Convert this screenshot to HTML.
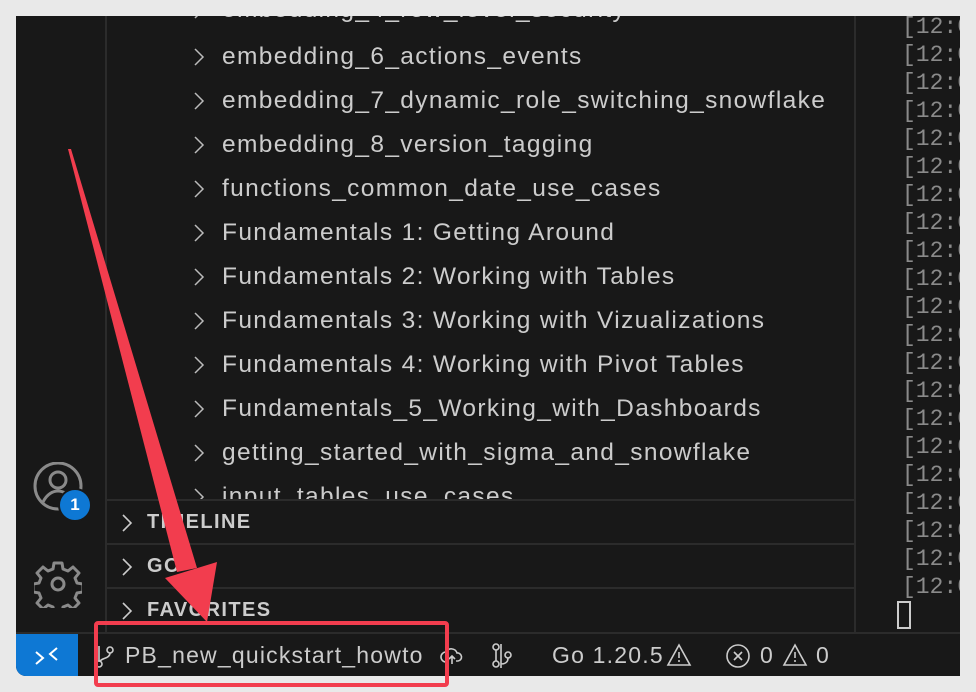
<!DOCTYPE html>
<html><head><meta charset="utf-8"><style>
body{margin:0;width:976px;height:692px;background:#e9e9e9;position:relative;overflow:hidden;font-family:"Liberation Sans",sans-serif}
.win{position:absolute;left:16px;top:16px;width:944px;height:660px;background:#181818;overflow:hidden;border-bottom-left-radius:10px}
.act{position:absolute;left:0;top:0;width:89px;height:616px;border-right:2px solid #2b2b2b}
.side{position:absolute;left:91px;top:0;width:747px;height:616px;border-right:2px solid #2b2b2b}
.item{position:absolute;left:115px;color:#cccccc;font-size:24.5px;letter-spacing:1.35px;height:44px;line-height:44px;white-space:nowrap}
.chev{position:absolute;left:-30px;top:0}
.sec{position:absolute;left:0;width:747px;height:43px;border-top:2px solid #2b2b2b;color:#cccccc;font-weight:bold;font-size:20px;letter-spacing:1.4px;line-height:43px}
.sec span{position:absolute;left:40px}
.term{position:absolute;left:886px;top:-3px;font-family:"Liberation Mono",monospace;font-size:23px;color:#8a8a8a;line-height:28px}
.status{position:absolute;left:0;top:616px;width:944px;height:44px;border-top:2px solid #2b2b2b;color:#cccccc;font-size:23px;letter-spacing:1.2px;line-height:42px}
.remote{position:absolute;left:0;top:0;width:62px;height:44px;background:#0e78d4}
</style></head><body>
<div class="win">
 <div class="act">
  <svg style="position:absolute;left:16px;top:446px" width="56" height="56" viewBox="0 0 56 56" fill="none" stroke="#8a8a8a" stroke-width="3"><circle cx="26" cy="24" r="23"/><circle cx="26" cy="18" r="8"/><path d="M11 40c4-8 10-11 15-11s11 3 15 11"/></svg>
  <div style="position:absolute;left:42px;top:472px;width:30px;height:30px;border-radius:50%;background:#0e78d4;border:2px solid #181818;color:#fff;font-weight:bold;font-size:17px;line-height:30px;text-align:center">1</div>
  <svg style="position:absolute;left:18px;top:544px" width="48" height="48" viewBox="0 0 48 48" fill="none" stroke="#8a8a8a" stroke-width="3" stroke-linejoin="round"><path d="M20 3h8l1 6 5 2 5-4 6 6-4 5 2 5 6 1v8l-6 1-2 5 4 5-6 6-5-4-5 2-1 6h-8l-1-6-5-2-5 4-6-6 4-5-2-5-6-1v-8l6-1 2-5-4-5 6-6 5 4 5-2z"/><circle cx="24" cy="24" r="6"/></svg>
 </div>
 <div class="side">
  <div class="item" style="top:-28px"><svg class="chev" width="14" height="44" viewBox="0 0 14 44"><path d="M3 14l8 8-8 8" fill="none" stroke="#bbb" stroke-width="1.5"/></svg>embedding_4_row_level_security</div>
  <div class="item" style="top:19px"><svg class="chev" width="14" height="44" viewBox="0 0 14 44"><path d="M3 14l8 8-8 8" fill="none" stroke="#bbb" stroke-width="1.5"/></svg>embedding_6_actions_events</div>
  <div class="item" style="top:63px"><svg class="chev" width="14" height="44" viewBox="0 0 14 44"><path d="M3 14l8 8-8 8" fill="none" stroke="#bbb" stroke-width="1.5"/></svg>embedding_7_dynamic_role_switching_snowflake</div>
  <div class="item" style="top:107px"><svg class="chev" width="14" height="44" viewBox="0 0 14 44"><path d="M3 14l8 8-8 8" fill="none" stroke="#bbb" stroke-width="1.5"/></svg>embedding_8_version_tagging</div>
  <div class="item" style="top:151px"><svg class="chev" width="14" height="44" viewBox="0 0 14 44"><path d="M3 14l8 8-8 8" fill="none" stroke="#bbb" stroke-width="1.5"/></svg>functions_common_date_use_cases</div>
  <div class="item" style="top:195px"><svg class="chev" width="14" height="44" viewBox="0 0 14 44"><path d="M3 14l8 8-8 8" fill="none" stroke="#bbb" stroke-width="1.5"/></svg>Fundamentals 1: Getting Around</div>
  <div class="item" style="top:239px"><svg class="chev" width="14" height="44" viewBox="0 0 14 44"><path d="M3 14l8 8-8 8" fill="none" stroke="#bbb" stroke-width="1.5"/></svg>Fundamentals 2: Working with Tables</div>
  <div class="item" style="top:283px"><svg class="chev" width="14" height="44" viewBox="0 0 14 44"><path d="M3 14l8 8-8 8" fill="none" stroke="#bbb" stroke-width="1.5"/></svg>Fundamentals 3: Working with Vizualizations</div>
  <div class="item" style="top:327px"><svg class="chev" width="14" height="44" viewBox="0 0 14 44"><path d="M3 14l8 8-8 8" fill="none" stroke="#bbb" stroke-width="1.5"/></svg>Fundamentals 4: Working with Pivot Tables</div>
  <div class="item" style="top:371px"><svg class="chev" width="14" height="44" viewBox="0 0 14 44"><path d="M3 14l8 8-8 8" fill="none" stroke="#bbb" stroke-width="1.5"/></svg>Fundamentals_5_Working_with_Dashboards</div>
  <div class="item" style="top:415px"><svg class="chev" width="14" height="44" viewBox="0 0 14 44"><path d="M3 14l8 8-8 8" fill="none" stroke="#bbb" stroke-width="1.5"/></svg>getting_started_with_sigma_and_snowflake</div>
  <div class="item" style="top:459px"><svg class="chev" width="14" height="44" viewBox="0 0 14 44"><path d="M3 14l8 8-8 8" fill="none" stroke="#bbb" stroke-width="1.5"/></svg>input_tables_use_cases</div>
  <div class="sec" style="top:483px;background:#181818"><svg style="position:absolute;left:13px;top:0" width="14" height="43" viewBox="0 0 14 43"><path d="M3 14l8 8-8 8" fill="none" stroke="#ccc" stroke-width="1.6"/></svg><span>TIMELINE</span></div>
  <div class="sec" style="top:527px"><svg style="position:absolute;left:13px;top:0" width="14" height="43" viewBox="0 0 14 43"><path d="M3 14l8 8-8 8" fill="none" stroke="#ccc" stroke-width="1.6"/></svg><span>GO</span></div>
  <div class="sec" style="top:571px"><svg style="position:absolute;left:13px;top:0" width="14" height="43" viewBox="0 0 14 43"><path d="M3 14l8 8-8 8" fill="none" stroke="#ccc" stroke-width="1.6"/></svg><span>FAVORITES</span></div>
 </div>
 <div class="term">[12:0<br>[12:0<br>[12:0<br>[12:0<br>[12:0<br>[12:0<br>[12:0<br>[12:0<br>[12:0<br>[12:0<br>[12:0<br>[12:0<br>[12:0<br>[12:0<br>[12:0<br>[12:0<br>[12:0<br>[12:0<br>[12:0<br>[12:0<br>[12:0</div>
 <div style="position:absolute;left:881px;top:585px;width:10px;height:24px;border:2px solid #ccc"></div>
 <div class="status">
  <div class="remote"><svg width="62" height="44" viewBox="0 0 62 44" fill="none" stroke="#fff" stroke-width="2"><path d="M20 30l7-6-7-6M41 14l-7 6 7 6"/></svg></div>
  <svg style="position:absolute;left:78px;top:10px" width="22" height="26" viewBox="0 0 22 26" fill="none" stroke="#ccc" stroke-width="1.6"><circle cx="5" cy="20" r="3"/><circle cx="16" cy="6" r="3"/><path d="M5 2v15M16 9c0 6-10 5-10 9"/></svg>
  <span style="position:absolute;left:109px">PB_new_quickstart_howto</span>
  <svg style="position:absolute;left:424px;top:10px" width="24" height="24" viewBox="0 0 24 24" fill="none" stroke="#ccc" stroke-width="1.6"><path d="M6 18a5 5 0 010-10 6 6 0 0111 1 4 4 0 011 8h-2M12 20v-8M9 15l3-3 3 3"/></svg>
  <svg style="position:absolute;left:474px;top:8px" width="26" height="28" viewBox="0 0 26 28" fill="none" stroke="#ccc" stroke-width="1.6"><circle cx="6" cy="5" r="3"/><circle cx="6" cy="22" r="3"/><circle cx="18" cy="13" r="3"/><path d="M6 8v11M11 2v24M18 16c0 5-4 6-7 6"/></svg>
  <span style="position:absolute;left:536px">Go 1.20.5</span>
  <svg style="position:absolute;left:650px;top:9px" width="26" height="24" viewBox="0 0 26 24" fill="none" stroke="#ccc" stroke-width="1.6"><path d="M13 2l11 20H2z M13 9v6M13 17v2"/></svg>
  <svg style="position:absolute;left:710px;top:10px" width="24" height="24" viewBox="0 0 24 24" fill="none" stroke="#ccc" stroke-width="1.6"><circle cx="12" cy="12" r="11"/><path d="M8 8l8 8M16 8l-8 8"/></svg>
  <span style="position:absolute;left:744px">0</span>
  <svg style="position:absolute;left:766px;top:9px" width="26" height="24" viewBox="0 0 26 24" fill="none" stroke="#ccc" stroke-width="1.6"><path d="M13 2l11 20H2z M13 9v6M13 17v2"/></svg>
  <span style="position:absolute;left:800px">0</span>
 </div>
</div>
<svg style="position:absolute;left:0;top:0" width="976" height="692">
 <polygon points="68,149 71,149 197,568 177,572" fill="#f23d4e"/>
 <polygon points="165,578 217,562 207,622" fill="#f23d4e"/>
 <rect x="96" y="623" width="351" height="62" fill="none" stroke="#f23d4e" stroke-width="4" rx="2"/>
</svg>
</body></html>
